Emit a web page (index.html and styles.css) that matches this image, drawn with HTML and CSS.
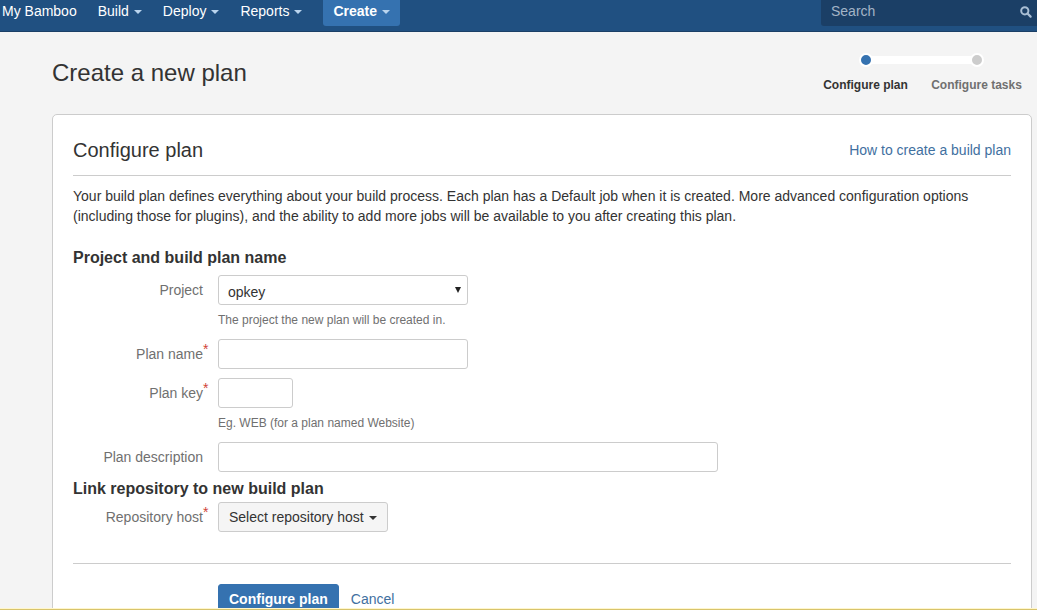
FILE: index.html
```html
<!DOCTYPE html>
<html lang="en">
<head>
<meta charset="utf-8">
<meta name="viewport" content="width=device-width, initial-scale=1">
<title>Create a new plan - Bamboo</title>
<link rel="stylesheet" href="styles.css">
</head>
<body>
<header class="header">
  <nav class="nav">
    <a class="nav-link" href="#">My Bamboo</a>
    <a class="nav-link" href="#">Build<span class="caret"></span></a>
    <a class="nav-link" href="#">Deploy<span class="caret"></span></a>
    <a class="nav-link" href="#">Reports<span class="caret"></span></a>
    <button class="create" type="button">Create<span class="caret"></span></button>
  </nav>
  <form class="search" role="search">
    <input class="search-input" type="search" placeholder="Search" aria-label="Search">
    <button class="search-button" type="button" aria-label="Submit search">
      <svg class="search-icon" viewBox="0 0 12 12" width="12" height="12" aria-hidden="true">
        <circle cx="4.8" cy="4.8" r="3.6" fill="none" stroke="currentColor" stroke-width="2"/>
        <path d="M7.5 7.5L10.6 10.6" stroke="currentColor" stroke-width="2.2" stroke-linecap="round"/>
      </svg>
    </button>
  </form>
</header>
<main class="page">
  <div class="page-header">
    <h1 class="page-title">Create a new plan</h1>
    <ol class="progress">
      <li class="step step-current">Configure plan</li>
      <li class="step">Configure tasks</li>
    </ol>
  </div>
  <section class="panel">
    <div class="panel-header">
      <h2 class="panel-title">Configure plan</h2>
      <a class="link" href="#">How to create a build plan</a>
    </div>
    <p class="intro">Your build plan defines everything about your build process. Each plan has a Default job when it is created. More advanced configuration options (including those for plugins), and the ability to add more jobs will be available to you after creating this plan.</p>
    <form class="form">
      <h3 class="section-title">Project and build plan name</h3>
      <div class="field">
        <label class="label" for="project">Project</label>
        <div class="control">
          <div class="select-wrap">
            <select class="input select" id="project"><option>opkey</option></select>
            <svg class="select-arrow" viewBox="0 0 6 6" width="6" height="6" aria-hidden="true"><path d="M0 0H6L3 6Z" fill="#222"/></svg>
          </div>
          <p class="description">The project the new plan will be created in.</p>
        </div>
      </div>
      <div class="field">
        <label class="label" for="plan-name">Plan name<span class="required">*</span></label>
        <div class="control"><input class="input" id="plan-name" type="text" required></div>
      </div>
      <div class="field">
        <label class="label" for="plan-key">Plan key<span class="required">*</span></label>
        <div class="control">
          <input class="input input-short" id="plan-key" type="text" required>
          <p class="description">Eg. WEB (for a plan named Website)</p>
        </div>
      </div>
      <div class="field">
        <label class="label" for="plan-description">Plan description</label>
        <div class="control"><input class="input input-long" id="plan-description" type="text"></div>
      </div>
      <h3 class="section-title section-title-tight">Link repository to new build plan</h3>
      <div class="field">
        <label class="label" for="repository">Repository host<span class="required">*</span></label>
        <div class="control"><button class="button" id="repository" type="button">Select repository host<span class="caret"></span></button></div>
      </div>
      <div class="actions">
        <button class="button button-primary" type="submit">Configure plan</button>
        <a class="link" href="#">Cancel</a>
      </div>
    </form>
  </section>
</main>
<div class="bottom-bar"></div>
</body>
</html>
```
FILE: styles.css
```css
*,
*::before,
*::after {
  box-sizing: border-box;
}

body {
  margin: 0;
  height: 100vh;
  overflow: hidden;
  background: #f4f4f4;
  color: #333;
  font: 14px/20px "Liberation Sans", Arial, sans-serif;
}

h1, h2, h3, p, ol {
  margin: 0;
  padding: 0;
}

button, input, select {
  font: inherit;
}

.header {
  display: flex;
  justify-content: space-between;
  height: 32px;
  padding-left: 2px;
  background: #205081;
  border-bottom: 1px solid #1b3f66;
}

.nav {
  display: flex;
  align-items: flex-start;
  gap: 21px;
}

.nav-link {
  color: #fff;
  line-height: 22px;
  text-decoration: none;
  white-space: nowrap;
}

.caret {
  display: inline-block;
  margin-left: 5px;
  border: 4px solid transparent;
  border-top-color: currentColor;
  border-bottom: 0;
  vertical-align: middle;
}

.header .caret {
  border-top-color: #b9d4ee;
}

.create {
  height: 26px;
  padding: 0 10px 4px;
  border: 0;
  border-radius: 0 0 3px 3px;
  background: #3572b0;
  color: #fff;
  font-weight: bold;
  line-height: 22px;
}

.search {
  display: flex;
  align-items: flex-start;
  width: 216px;
  height: 26px;
  padding: 0 5px 0 10px;
  border-radius: 0 0 0 3px;
  background: #1b3f66;
}

.search-input {
  flex: 1;
  min-width: 0;
  height: 22px;
  padding: 0;
  border: 0;
  outline: 0;
  background: transparent;
  color: #fff;
}

.search-input::placeholder {
  color: #a3b4c6;
}

.search-button {
  display: flex;
  align-items: center;
  height: 24px;
  padding: 0;
  border: 0;
  background: transparent;
  color: #a9bed4;
}

.page {
  padding: 0 5px 0 52px;
}

.page-header {
  display: flex;
  justify-content: space-between;
  height: 82px;
}

.page-title {
  padding-top: 26px;
  font-size: 24px;
  font-weight: normal;
  line-height: 30px;
}

.progress {
  display: flex;
  padding-top: 21px;
  list-style: none;
}

.step {
  position: relative;
  width: 111px;
  color: #707070;
  font-size: 12px;
  font-weight: bold;
  line-height: 20px;
  text-align: center;
  white-space: nowrap;
}

.step::before {
  content: "";
  position: relative;
  z-index: 1;
  display: block;
  width: 14px;
  height: 14px;
  margin: 0 auto 8px;
  border: 2px solid #fff;
  border-radius: 50%;
  background: #ccc;
}

.step-current {
  color: #333;
}

.step-current::before {
  background: #3572b0;
}

.step-current::after {
  content: "";
  position: absolute;
  top: 3px;
  left: 50%;
  width: 100%;
  height: 8px;
  background: #fff;
}

.panel {
  padding: 20px;
  border: 1px solid #ccc;
  border-radius: 5px;
  background: #fff;
}

.panel-header {
  display: flex;
  align-items: center;
  justify-content: space-between;
  padding-bottom: 10px;
  border-bottom: 1px solid #ccc;
}

.panel-title {
  font-size: 20px;
  font-weight: normal;
  line-height: 30px;
}

.link {
  color: #41709f;
  text-decoration: none;
}

.intro {
  padding-top: 10px;
}

.section-title {
  margin: 22px 0 7px;
  font-size: 16px;
  line-height: 20px;
}

.section-title-tight {
  margin: 7px 0 3px;
}

.field {
  display: flex;
  gap: 15px;
}

.field + .field {
  margin-top: 9px;
}

.label {
  position: relative;
  width: 130px;
  color: #707070;
  line-height: 30px;
  text-align: right;
}

.required {
  position: absolute;
  top: -5px;
  left: 100%;
  color: #d04437;
}

.control {
  flex: 1;
}

.input {
  display: block;
  width: 100%;
  max-width: 250px;
  height: 30px;
  padding: 4px 9px;
  border: 1px solid #ccc;
  border-radius: 3px;
  background: #fff;
  color: #333;
}

.input-short {
  max-width: 75px;
}

.input-long {
  max-width: 500px;
}

.select-wrap {
  position: relative;
  max-width: 250px;
}

.select {
  padding: 6px 9px 4px;
  appearance: none;
}

.select-arrow {
  position: absolute;
  top: 12px;
  right: 7px;
}

.description {
  padding-top: 5px;
  color: #707070;
  font-size: 12px;
}

.button {
  height: 30px;
  padding: 4px 10px;
  border: 1px solid #ccc;
  border-radius: 3px;
  background: #f5f5f5;
  color: #333;
  line-height: 20px;
}

.button-primary {
  border-color: #3572b0;
  background: #3572b0;
  color: #fff;
  font-weight: bold;
}

.actions {
  display: flex;
  align-items: center;
  gap: 12px;
  margin-top: 31px;
  padding: 20px 0 0 145px;
  border-top: 1px solid #ccc;
}

.bottom-bar {
  position: fixed;
  right: 0;
  bottom: 0;
  left: 0;
  height: 3px;
  border-top: 1px solid #d8c46c;
  background: #fff;
  box-shadow: 0 -1px #fff6cc;
}
```
